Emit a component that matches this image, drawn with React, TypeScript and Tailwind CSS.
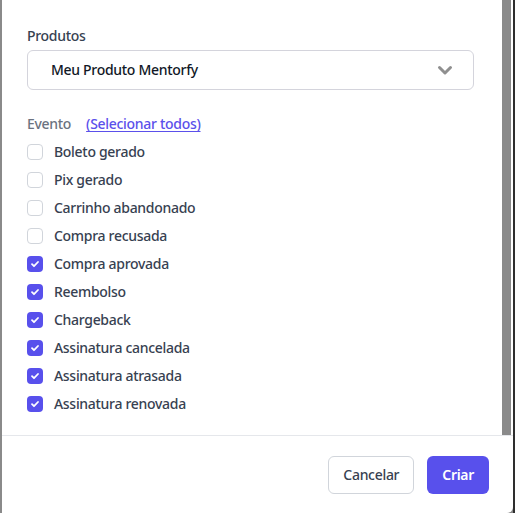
import { useState } from "react";

const EVENTS = [
  { label: "Boleto gerado", on: false },
  { label: "Pix gerado", on: false },
  { label: "Carrinho abandonado", on: false },
  { label: "Compra recusada", on: false },
  { label: "Compra aprovada", on: true },
  { label: "Reembolso", on: true },
  { label: "Chargeback", on: true },
  { label: "Assinatura cancelada", on: true },
  { label: "Assinatura atrasada", on: true },
  { label: "Assinatura renovada", on: true },
];

export default function App() {
  const [checked, setChecked] = useState(EVENTS.map((e) => e.on));

  const toggle = (i: number) =>
    setChecked((prev) => prev.map((v, j) => (j === i ? !v : v)));

  return (
    <div
      className="w-[515px] h-[513px] flex bg-[#8a8a8a] overflow-hidden tracking-[-0.3px]"
      style={{ fontFamily: '"Noto Sans", "Open Sans", sans-serif' }}
    >
      <div className="w-[2px] shrink-0" />
      <div className="w-[511px] h-[513px] bg-white flex flex-col rounded-br-md">
        <div className="h-[435px] flex">
          <div className="flex-1 pl-[25px] pr-[28px] pt-[26px]">
            <label className="block text-sm leading-5 font-medium text-[#374151]">
              Produtos
            </label>
            <button className="mt-1 w-full h-10 flex items-center justify-between border border-[#d4d4dc] rounded-md pl-[23px] pr-[20px] text-sm font-medium text-[#111827]">
              <span>Meu Produto Mentorfy</span>
              <svg width="16" height="16" viewBox="0 0 16 16" fill="none">
                <path
                  d="M2.5 5.5L8 11l5.5-5.5"
                  stroke="#8f8f8f"
                  strokeWidth="3"
                  strokeLinecap="round"
                  strokeLinejoin="round"
                />
              </svg>
            </button>
            <div className="mt-6 flex items-center gap-[15px] text-sm leading-5 font-medium">
              <span className="text-[#6b7280]">Evento</span>
              <button
                className="text-[#5b50eb] underline underline-offset-2"
                onClick={() => setChecked(EVENTS.map(() => true))}
              >
                (Selecionar todos)
              </button>
            </div>
            <div className="mt-1 flex flex-col">
              {EVENTS.map((e, i) => (
                <label
                  key={e.label}
                  className="h-7 flex items-center gap-[11px] text-sm font-medium text-[#374151] cursor-pointer"
                >
                  <span
                    onClick={() => toggle(i)}
                    className={
                      checked[i]
                        ? "w-4 h-4 rounded-[4px] bg-[#5850ec] flex items-center justify-center"
                        : "w-4 h-4 rounded-[4px] border border-[#d1d5db] bg-white"
                    }
                  >
                    {checked[i] && (
                      <svg width="10" height="10" viewBox="0 0 10 10" fill="none">
                        <path
                          d="M2 5.2l2 2 4-4.2"
                          stroke="white"
                          strokeWidth="1.8"
                          strokeLinecap="round"
                          strokeLinejoin="round"
                        />
                      </svg>
                    )}
                  </span>
                  <span>{e.label}</span>
                </label>
              ))}
            </div>
          </div>
          <div className="w-[9px] bg-[#8a8a8a]" />
          <div className="w-[2px]" />
        </div>
        <div className="flex-1 border-t border-[#e5e7eb] flex justify-end items-start gap-[13px] pt-5 pr-6">
          <button className="h-[38px] px-[14px] rounded-md border border-[#d1d5db] bg-white text-sm font-medium text-[#374151]">
            Cancelar
          </button>
          <button className="h-[38px] px-[15px] rounded-md bg-[#5850ec] text-sm font-semibold text-white">
            Criar
          </button>
        </div>
      </div>
      <div className="w-[2px] shrink-0 bg-[#2e2e2e]" />
    </div>
  );
}
